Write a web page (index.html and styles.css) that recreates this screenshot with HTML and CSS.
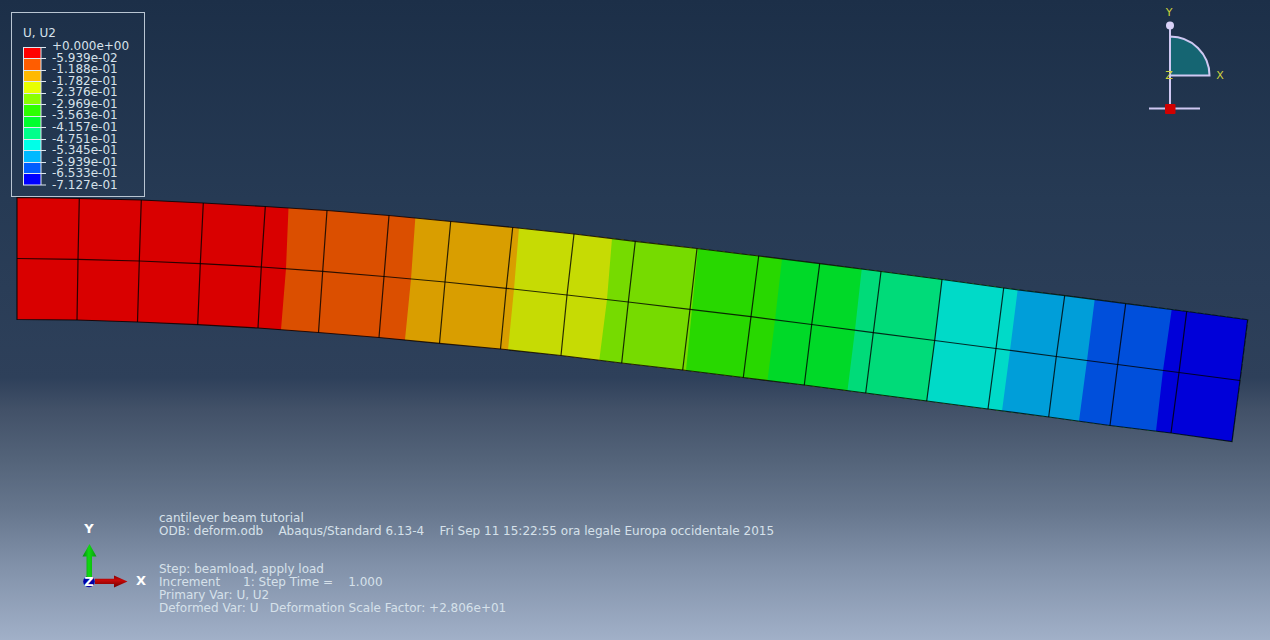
FILE: index.html
```
<!DOCTYPE html>
<html lang="en">
<head>
<meta charset="utf-8">
<meta name="viewport" content="width=device-width, initial-scale=1">
<title>deform.odb</title>
<link rel="stylesheet" href="styles.css">
</head>
<body>
<main class="viewport">
  <svg class="model" viewBox="0 0 1270 640" role="img" aria-label="Deformed beam contour plot">
    <defs>
      <clipPath id="beam">
        <path d="M17 197.5L79 198.5 141 200 203 203 265 206.5 327 210.5 389 215.5 451 221.5 513 227.5 574 234 635 241.3 697 248.5 758.7 256 820 263.7 881 271.5 942 279.5 1003.7 288 1065 295.7 1126 303.7 1187 311.5 1247.7 319.7L1240 380.5 1232 441.5 1171 433 1110 425.5 1049 417 988 409 927 401 865.7 393 804.3 385 743.3 377.5 682.7 370 621.7 363 561 355.5 500.5 349 439.5 343.3 379 337.5 318.5 332.5 258 328 197.7 324.7 137.5 322 77 320 17 319.5Z"/>
      </clipPath>
    </defs>
    <g clip-path="url(#beam)">
      <path fill="#d90000" d="M0 180H1270V460H0Z"/>
      <path fill="#db4f00" d="M289 190L288.5 207.5 286 268.5 281 329.5 280 350V460H1270V190Z"/>
      <path fill="#d99e00" d="M416 200L415.3 218 411 279 405 339.5 404 355V460H1270V200Z"/>
      <path fill="#c6db04" d="M520 210L519 228 514 289 508 350 506 370V460H1270V210Z"/>
      <path fill="#76db00" d="M614 220L612 238.5 607 299.5 599.3 360 597 380V460H1270V220Z"/>
      <path fill="#28d800" d="M700 230L698 248.5 692 309.5 686 370.5 684 390V460H1270V230Z"/>
      <path fill="#00d928" d="M784 240L782 259 775 320 767.5 380.5 765 400V460H1270V240Z"/>
      <path fill="#00db79" d="M864 250L861.7 269 855 330 847.5 390.5 845 410V460H1270V250Z"/>
      <path fill="#00dac8" d="M944 260L942 279.5 934.7 340.5 927 401 925 420V460H1270V260Z"/>
      <path fill="#009ed9" d="M1020 270L1017.7 289.5 1010 350.5 1002 411 1000 430V460H1270V270Z"/>
      <path fill="#004fdb" d="M1097 280L1094.7 299.5 1087 360.5 1079 421 1077 440V460H1270V280Z"/>
      <path fill="#0000d9" d="M1174 290L1171.7 309.5 1163 370.5 1156 431 1154 450V460H1270V290Z"/>
    </g>
    <g class="mesh">
      <path d="M17 197.5L79 198.5 141 200 203 203 265 206.5 327 210.5 389 215.5 451 221.5 513 227.5 574 234 635 241.3 697 248.5 758.7 256 820 263.7 881 271.5 942 279.5 1003.7 288 1065 295.7 1126 303.7 1187 311.5 1247.7 319.7L1240 380.5 1232 441.5 1171 433 1110 425.5 1049 417 988 409 927 401 865.7 393 804.3 385 743.3 377.5 682.7 370 621.7 363 561 355.5 500.5 349 439.5 343.3 379 337.5 318.5 332.5 258 328 197.7 324.7 137.5 322 77 320 17 319.5Z"/>
      <path d="M17 258.5L78 259.3 139.3 261 200.3 263.7 261.3 267 322.7 271.3 384 276.5 445 282 506.3 288.3 567 295 628.3 302 690 309.3 751 316.7 811.7 324.5 873.3 332.7 934.7 340.5 996 348.5 1056.3 356.5 1117.7 364.5 1179 372.5 1240 380.5"/>
      <path d="M79.3 198.5L78 259.3 77 320M141.3 200L139.3 261 137.5 322M203.3 203L200.3 263.7 197.7 324.7M265.3 206.5L261.3 267 258 328M327 210.5L322.7 271.3 318.5 332.5M389 215.5L384 276.5 379 337.5M450.7 221.5L445 282 439.5 343.3M512.7 227.5L506.3 288.3 500.5 349M574 234L567 295 561 355.5M635.3 241.3L628.3 302 621.7 363M697 248.5L690 309.3 682.7 370M758.7 256L751 316.7 743.3 377.5M819.7 263.7L811.7 324.5 804.3 385M881 271.5L873.3 332.7 865.7 393M942 279.5L934.7 340.5 926.7 401M1003.7 288L996 348.5 988 409M1064.7 295.7L1056.3 356.5 1048.7 417M1125.7 303.7L1117.7 364.5 1110 425.5M1186.7 311.5L1179 372.5 1171 433"/>
    </g>
  </svg>

  <div class="hud">
    <div class="hud-row">
      <section class="legend">
        <h1 class="legend-title">U, U2</h1>
        <div class="legend-body">
          <svg class="ramp" width="24" height="140" viewBox="0 0 24 140" aria-hidden="true">
            <path fill="#f00" d="M0 1h18v11.5H0z"/>
            <path fill="#ff5d00" d="M0 12.5h18V24H0z"/>
            <path fill="#ffb900" d="M0 24h18v11.5H0z"/>
            <path fill="#e8ff00" d="M0 35.5h18V47H0z"/>
            <path fill="#8bff00" d="M0 47h18v11.5H0z"/>
            <path fill="#2eff00" d="M0 58.5h18V70H0z"/>
            <path fill="#00ff2e" d="M0 70h18v11.5H0z"/>
            <path fill="#00ff8b" d="M0 81.5h18V93H0z"/>
            <path fill="#00ffe8" d="M0 93h18v11.5H0z"/>
            <path fill="#00b9ff" d="M0 104.5h18V116H0z"/>
            <path fill="#005dff" d="M0 116h18v11.5H0z"/>
            <path fill="#00f" d="M0 127.5h18V139H0z"/>
            <path class="ramp-lines" d="M.5 1V139M18 1V139M0 1.5H23M0 12.5H23M0 24.5H23M0 35.5H23M0 47.5H23M0 58.5H23M0 70.5H23M0 81.5H23M0 93.5H23M0 104.5H23M0 116.5H23M0 127.5H23M0 139H23"/>
          </svg>
          <ol class="levels">
            <li>+0.000e+00</li>
            <li>-5.939e-02</li>
            <li>-1.188e-01</li>
            <li>-1.782e-01</li>
            <li>-2.376e-01</li>
            <li>-2.969e-01</li>
            <li>-3.563e-01</li>
            <li>-4.157e-01</li>
            <li>-4.751e-01</li>
            <li>-5.345e-01</li>
            <li>-5.939e-01</li>
            <li>-6.533e-01</li>
            <li>-7.127e-01</li>
          </ol>
        </div>
      </section>
      <svg class="compass" width="90" height="116" viewBox="1140 0 90 116" role="img" aria-label="View compass">
        <path fill="#156572" stroke="#cfc8f2" stroke-width="2" d="M1170 36.500A39.500 39 0 0 1 1209.500 75.500H1170Z"/>
        <path fill="none" stroke="#cfc8f2" stroke-width="2" d="M1170 26V108M1149 108.500H1200"/>
        <circle cx="1170" cy="25.500" r="4" fill="#d9d2f8"/>
        <rect x="1165" y="104" width="10.500" height="10" rx="1" fill="#d00000"/>
        <g class="compass-label">
          <text x="1169" y="16">Y</text>
          <text x="1169" y="79">Z</text>
          <text x="1220" y="79">X</text>
        </g>
      </svg>
    </div>

    <div class="hud-row hud-bottom">
      <svg class="triad" width="75" height="75" viewBox="75 518 75 75" role="img" aria-label="Coordinate triad">
        <defs>
          <linearGradient id="green"><stop stop-color="#008a10"/><stop offset=".45" stop-color="#12d812"/><stop offset="1" stop-color="#079a0c"/></linearGradient>
          <linearGradient id="red" x2="0" y2="1"><stop stop-color="#8c0000"/><stop offset=".4" stop-color="#c80808"/><stop offset="1" stop-color="#6c0000"/></linearGradient>
        </defs>
        <circle cx="89" cy="581.500" r="5.800" fill="#0000a8"/>
        <path fill="url(#green)" d="M86.500 577V556.500H82.500L89.500 544 96.500 556.500H92V577Z"/>
        <path fill="url(#red)" d="M95 578.800H114V575.500L127.500 581.500 114 587.500V584H95Z"/>
        <g class="triad-label">
          <text x="89" y="533">Y</text>
          <text x="89" y="586">Z</text>
          <text x="141" y="585">X</text>
        </g>
      </svg>
      <section class="info">
        <p>cantilever beam tutorial
ODB: deform.odb    Abaqus/Standard 6.13-4    Fri Sep 11 15:22:55 ora legale Europa occidentale 2015</p>
        <p>Step: beamload, apply load
Increment      1: Step Time =    1.000
Primary Var: U, U2
Deformed Var: U   Deformation Scale Factor: +2.806e+01</p>
      </section>
    </div>
  </div>
</main>
</body>
</html>
```
FILE: styles.css
```
* {
  box-sizing: border-box;
}

body {
  margin: 0;
  font-family: "DejaVu Sans", Verdana, sans-serif;
  font-size: 12px;
  color: #d6e1ea;
}

.viewport {
  display: grid;
  min-height: 100vh;
  border-bottom: 1px solid #aaadb2;
  background: linear-gradient(#1c2f48 0%, #263a54 31%, #2e405a 59%, #425168 64%, #54647a 72%, #67778e 80%, #8090a8 88%, #a1b0c8 100%);
}

.model,
.hud {
  grid-area: 1 / 1;
}

.model {
  width: 100%;
}

.mesh {
  fill: none;
  stroke: #000;
  stroke-opacity: 0.8;
  stroke-width: 1.2;
}

.hud {
  display: flex;
  flex-direction: column;
  justify-content: space-between;
  z-index: 1;
}

.hud-row {
  display: flex;
  justify-content: space-between;
  align-items: flex-start;
}

.legend {
  margin: 12px 0 0 11px;
  padding: 13px 16px 5px 11px;
  border: 1px solid #b9c5d2;
}

.legend-title {
  margin: 0;
  font-size: 12px;
  font-weight: 400;
  line-height: 14px;
}

.legend-body {
  display: flex;
  gap: 5px;
  padding-top: 6px;
}

.ramp-lines {
  fill: none;
  stroke: #dfe7ef;
}

.levels {
  display: grid;
  grid-template-rows: repeat(13, 1fr);
  align-items: center;
  width: 76px;
  height: 150px;
  margin: -5px 0 0;
  padding: 0;
  list-style: none;
  line-height: 11px;
}

.compass {
  margin-right: 40px;
}

.compass-label {
  font-size: 11px;
  fill: #cdd23c;
  text-anchor: middle;
}

.hud-bottom {
  justify-content: flex-start;
  align-items: flex-end;
  gap: 9px;
  padding: 0 0 25px 75px;
}

.triad {
  flex: none;
  margin-bottom: 22px;
}

.triad-label {
  font-size: 13px;
  font-weight: 700;
  fill: #fff;
  text-anchor: middle;
}

.info {
  display: grid;
  gap: 25px;
  line-height: 13px;
}

.info p {
  margin: 0;
  white-space: pre-wrap;
}
```
